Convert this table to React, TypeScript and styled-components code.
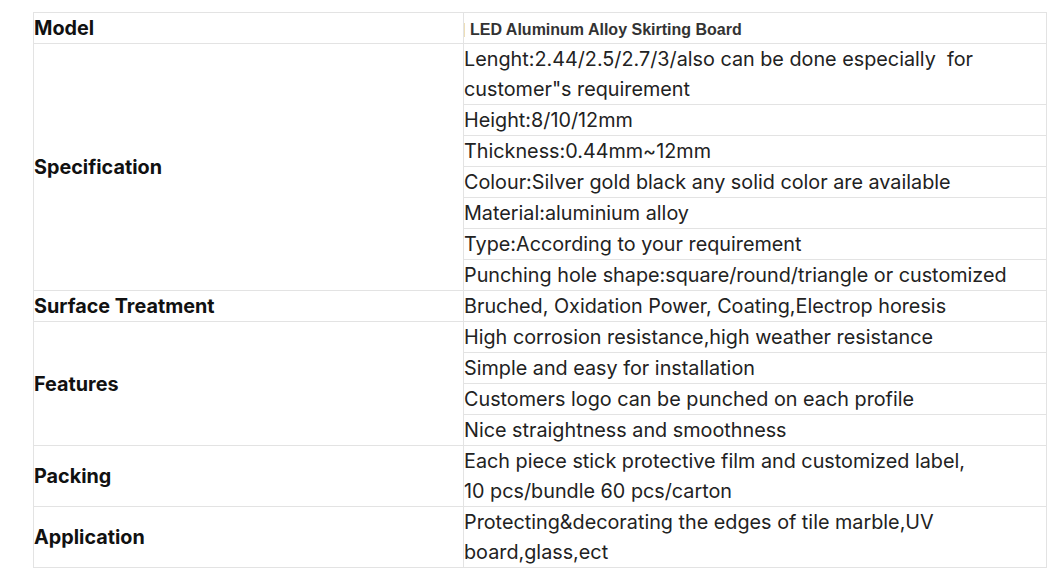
import styled, { createGlobalStyle } from 'styled-components';

const GlobalStyle = createGlobalStyle`
  html, body {
    margin: 0;
    padding: 0;
    background: #ffffff;
  }
`;

type Group = {
  label: string;
  items: string[];
};

const groups: Group[] = [
  {
    label: 'Specification',
    items: [
      'Lenght:2.44/2.5/2.7/3/also can be done especially \u00a0for customer"s requirement',
      'Height:8/10/12mm',
      'Thickness:0.44mm~12mm',
      'Colour:Silver gold black any solid color are available',
      'Material:aluminium alloy',
      'Type:According to your requirement',
      'Punching hole shape:square/round/triangle or customized',
    ],
  },
  {
    label: 'Surface Treatment',
    items: ['Bruched, Oxidation Power, Coating,Electrop horesis'],
  },
  {
    label: 'Features',
    items: [
      'High corrosion resistance,high weather resistance',
      'Simple and easy for installation',
      'Customers logo can be punched on each profile',
      'Nice straightness and smoothness',
    ],
  },
  {
    label: 'Packing',
    items: ['Each piece stick protective film and customized label,\n10 pcs/bundle 60 pcs/carton'],
  },
  {
    label: 'Application',
    items: ['Protecting&decorating the edges of tile marble,UV\nboard,glass,ect'],
  },
];

const App = () => {
  return (
    <>
      <GlobalStyle />
      <Page>
        <Table>
          <colgroup>
            <col style={{ width: 430 }} />
            <col />
          </colgroup>
          <tbody>
            <tr>
              <Label>Model</Label>
              <Value>
                <Heading>LED Aluminum Alloy Skirting Board</Heading>
              </Value>
            </tr>
            {groups.map((group) =>
              group.items.map((item, i) => (
                <tr key={group.label + i}>
                  {i === 0 && <Label rowSpan={group.items.length}>{group.label}</Label>}
                  <Value>{item}</Value>
                </tr>
              ))
            )}
          </tbody>
        </Table>
      </Page>
    </>
  );
};

export default App;

const Page = styled.div`
  padding: 12px 16px 0 33px;
  width: 1014px;
`;

const Table = styled.table`
  width: 1014px;
  border-collapse: collapse;
  table-layout: fixed;
  font-family: Inter, 'Noto Sans', sans-serif;
`;

const Label = styled.td`
  border: 1px solid #e3e3e3;
  padding: 0 1px 0 0;
  font-size: 19.8px;
  font-weight: 700;
  color: #111;
  line-height: 30px;
  vertical-align: middle;
`;

const Value = styled.td`
  border: 1px solid #e3e3e3;
  padding: 0 1px 0 0;
  font-size: 19.8px;
  font-weight: 400;
  color: #222;
  line-height: 30px;
  white-space: pre-line;
  vertical-align: middle;
`;

const Heading = styled.span`
  display: inline-block;
  border-left: 1px solid #eedfb8;
  padding-left: 5px;
  font-family: 'Liberation Sans', Arial, sans-serif;
  font-size: 16px;
  font-weight: 700;
  color: #333;
  line-height: 14px;
  vertical-align: middle;
`;
